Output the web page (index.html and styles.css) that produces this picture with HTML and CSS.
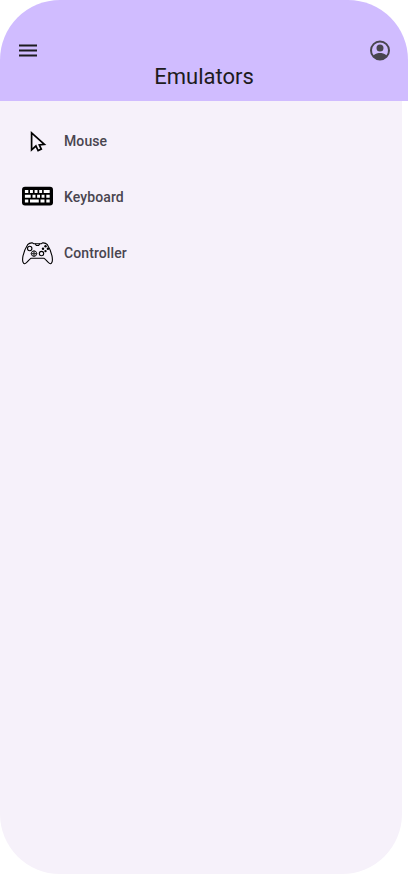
FILE: index.html
```html
<!DOCTYPE html>
<html lang="en">
<head>
<meta charset="utf-8">
<title>Emulators</title>
<link rel="stylesheet" href="styles.css">
</head>
<body>
<div class="screen">
  <header class="app-bar">
    <div class="actions">
      <svg class="icon" viewBox="0 .5 24 24" fill="#1d1b20"><path d="M3 18v-2h18v2zm0-5v-2h18v2zm0-5V6h18v2z"/></svg>
      <svg class="icon" viewBox="0 .5 24 24" fill="#49454f"><path fill-rule="evenodd" d="M12 2a10 10 0 1 0 0 20 10 10 0 0 0 0-20zm6.36 14.83C16.93 15.09 13.46 14.5 12 14.5s-4.93.59-6.36 2.33A8 8 0 1 1 18.36 16.83zM12 6a3.5 3.5 0 1 0 0 7 3.5 3.5 0 0 0 0-7z"/></svg>
    </div>
    <h1 class="title">Emulators</h1>
  </header>
  <nav class="drawer">
    <a class="item">
      <svg class="glyph" viewBox="0.3 0 32 32" fill="none" stroke="#000" stroke-width="1.7"><path d="M9.9 7.8V24.8L14.2 21L16.4 25.6L19.6 24.1L17.6 19.9L22.7 19.3Z"/></svg>
      <span>Mouse</span>
    </a>
    <a class="item">
      <svg class="glyph" viewBox="0.5 0 32 32"><rect x="0.5" y="5.8" width="31" height="18.6" rx="3" fill="#000"/><path fill="#fff" d="M3.4 9h3.4v3H3.4zM8.5 9h2.9v3H8.5zM13.1 9H16v3h-2.9zM17.7 9h2.9v3h-2.9zM22.2 9h6v3h-6zM3.4 13.7h5.8v3H3.4zM11 13.7h3v3h-3zM15.6 13.7h2.9v3h-2.9zM20.1 13.7H23v3h-2.9zM24.8 13.7h3.4v3h-3.4zM3.4 18.4h3.4v3H3.4zM8.5 18.4h8.8v3H8.5zM19 18.4h4v3h-4zM24.8 18.4h3.4v3h-3.4z"/></svg>
      <span>Keyboard</span>
    </a>
    <a class="item">
      <svg class="glyph" viewBox="0.5 -.6 32 32" fill="none" stroke="#000" stroke-width="1.1"><path d="M6.1 7.1C7.5 5.6 9.2 5.2 10.7 5.3L12.2 6.2H19.8L21.3 5.3C22.8 5.2 24.5 5.6 25.9 7.1C28.6 11.3 30.7 17.4 30.9 21.8C31 24.3 30 26.3 28.7 26.2C26.6 25.7 24.5 21.7 22.4 20.7H9.6C7.5 21.7 5.4 25.7 3.3 26.2C2 26.3 1 24.3 1.1 21.8C1.3 17.4 3.4 11.3 6.1 7.1Z"/><circle cx="8.2" cy="10.9" r="2.2"/><circle cx="20" cy="16" r="2.2"/><circle cx="12.5" cy="16" r="2.7" stroke-width=".9"/><path d="M12.5 12.8v6.4M9.3 16h6.4" stroke="#333" stroke-width="1.3"/><path d="M13.8 6.2l1 1.7h2.4l1-1.7"/><g fill="#000" stroke="none"><circle cx="24" cy="8.6" r="1.2"/><circle cx="21.5" cy="11.1" r="1.2"/><circle cx="26.4" cy="11.1" r="1.2"/><circle cx="24" cy="13.5" r="1.2"/></g></svg>
      <span>Controller</span>
    </a>
  </nav>
</div>
</body>
</html>
```
FILE: styles.css
```css
* { box-sizing: border-box; }
body {
  margin: 0;
  background: #fff;
  font-family: Roboto, "Liberation Sans", sans-serif;
}
.screen {
  width: 408px;
  height: 874px;
  display: flex;
  flex-direction: column;
}
.app-bar {
  height: 101px;
  flex: none;
  padding: 39px 16px 0;
  background: #d0bcff;
  border-radius: 60px 60px 0 0;
}
.actions {
  display: flex;
  justify-content: space-between;
  height: 24px;
}
.icon {
  width: 24px;
  height: 24px;
}
.title {
  margin: 0;
  color: #1d1b20;
  font-size: 22px;
  font-weight: 400;
  line-height: 28px;
  text-align: center;
}
.drawer {
  flex: 1;
  width: 402px;
  padding: 12px 22px;
  background: #f6f1fa;
  border-radius: 0 0 60px 60px;
}
.item {
  display: flex;
  align-items: center;
  gap: 10px;
  height: 56px;
  color: #49454f;
  font-size: 14px;
  font-weight: 500;
  line-height: 20px;
  letter-spacing: 0.1px;
}
.glyph {
  width: 32px;
  height: 32px;
}
```
